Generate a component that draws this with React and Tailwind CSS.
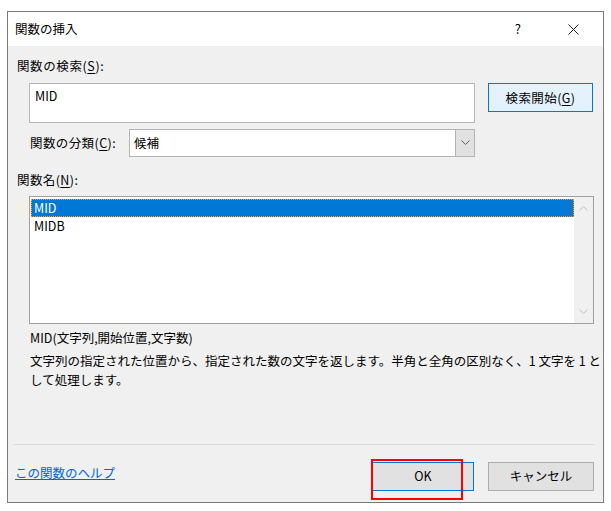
import React from 'react';

const font = { fontFamily: '"Noto Sans CJK JP", "Noto Sans", sans-serif' };

// small chevron used by the combo box and the list scrollbar
const Chevron = ({ up, color = '#606060' }) => (
  <svg width="9" height="6" viewBox="0 0 9 6">
    <path d={up ? 'M0.5 5.5 L4.5 1.5 L8.5 5.5' : 'M0.5 0.5 L4.5 4.5 L8.5 0.5'} fill="none" stroke={color} strokeWidth="1" />
  </svg>
);

const Key = ({ children }) => <span className="underline underline-offset-2">{children}</span>;

const App = () => {
  return (
    <div className="w-[611px] h-[511px] bg-white overflow-hidden pt-[11px] pl-[7px] text-[12.5px] text-black" style={font}>
      <div className="w-[597px] h-[492px] border border-[#7a7a7a] bg-[#f0f0f0] flex flex-col">
        {/* title bar */}
        <div className="h-[34px] bg-white flex items-center shrink-0">
          <span className="ml-[7px] text-[12.5px]">関数の挿入</span>
          <span className="ml-auto mr-[47px] text-[13px]">?</span>
          <svg className="mr-[24px]" width="11" height="11" viewBox="0 0 11 11">
            <path d="M0.5 0.5 L10.5 10.5 M10.5 0.5 L0.5 10.5" stroke="#222" strokeWidth="1" />
          </svg>
        </div>

        {/* body */}
        <div className="flex flex-col">
          <div className="mt-[12px] ml-[9px] leading-[16px] h-[16px] tracking-[0.6px]">
            関数の検索(<Key>S</Key>):
          </div>

          <div className="mt-[9px] ml-[21px] flex items-start">
            <div className="w-[446px] h-[40px] bg-white border border-[#b4b4b4] pl-[5px] pt-[4px] leading-[16px]">
              MID
            </div>
            <button className="ml-[13px] w-[105px] h-[29px] bg-[#e5f1fb] border border-[#0078d7] leading-[16px] tracking-[0.4px]">
              検索開始(<Key>G</Key>)
            </button>
          </div>

          <div className="mt-[6px] ml-[22px] flex items-center">
            <span className="w-[99px] leading-[16px] tracking-[0.4px]">
              関数の分類(<Key>C</Key>):
            </span>
            <div className="w-[346px] h-[28px] bg-white border border-[#b4b4b4] flex items-stretch">
              <span className="pl-[4px] flex-1 flex items-center">候補</span>
              <div className="w-[19px] bg-[#e1e1e1] border-l border-[#b4b4b4] flex items-center justify-center">
                <Chevron />
              </div>
            </div>
          </div>

          <div className="mt-[15px] ml-[9px] leading-[16px] h-[16px] tracking-[0.4px]">
            関数名(<Key>N</Key>):
          </div>

          <div className="mt-[8px] ml-[21px] w-[565px] h-[128px] bg-white border border-[#a0a0a0] flex">
            <div className="flex-1 pt-[2px] pl-[1px]">
              <div className="h-[18px] bg-[#0078d7] text-white pl-[3px] leading-[18px] outline outline-1 outline-dotted outline-[#f0a030] -outline-offset-1">
                MID
              </div>
              <div className="h-[18px] pl-[3px] leading-[18px]">MIDB</div>
            </div>
            <div className="w-[19px] bg-[#f0f0f0] flex flex-col items-center justify-between py-[8px]">
              <Chevron up color="#c2c2c2" />
              <Chevron color="#c2c2c2" />
            </div>
          </div>

          <div className="mt-[6px] ml-[22px] leading-[16px] h-[16px]">MID(文字列,開始位置,文字数)</div>
          <div className="mt-[5px] ml-[22px] leading-[19px]">
            <div className="whitespace-nowrap">文字列の指定された位置から、指定された数の文字を返します。半角と全角の区別なく、1 文字を 1 と</div>
            <div>して処理します。</div>
          </div>

          <div className="mt-[55px] ml-[6px] w-[580px] h-px bg-[#dadada]" />

          <div className="mt-[17px] flex items-start">
            <a className="ml-[7px] mt-[3px] text-[#0066cc] underline leading-[16px]" href="#">
              この関数のヘルプ
            </a>
            <div className="relative ml-auto">
              <button className="w-[102px] h-[29px] bg-[#e1e1e1] border border-[#0078d7]">OK</button>
              <div className="absolute left-[-1px] top-[-3px] w-[92px] h-[41px] border-2 border-[#ff0000]" />
            </div>
            <button className="ml-[14px] mr-[9px] w-[106px] h-[29px] bg-[#e1e1e1] border border-[#adadad]">キャンセル</button>
          </div>
        </div>
      </div>
    </div>
  );
};

export default App;
